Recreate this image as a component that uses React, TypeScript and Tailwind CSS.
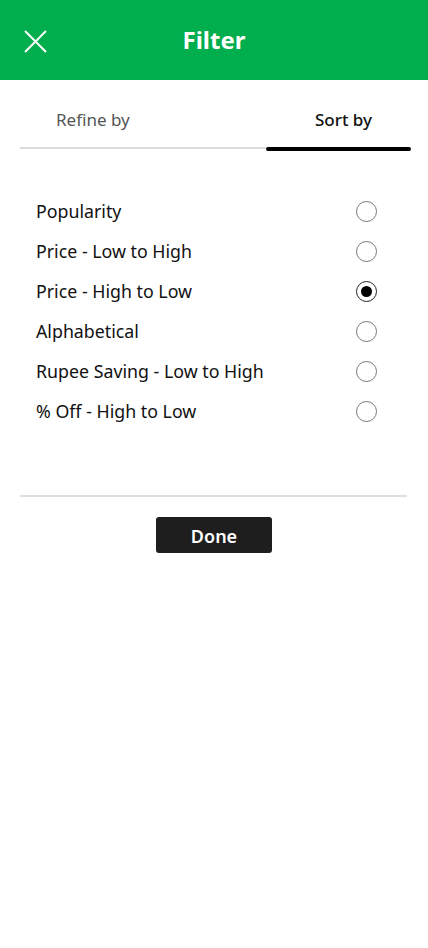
const options = [
  "Popularity",
  "Price - Low to High",
  "Price - High to Low",
  "Alphabetical",
  "Rupee Saving - Low to High",
  "% Off - High to Low",
];

const selected = 2;

export default function App() {
  return (
    <div
      className="w-[428px] min-h-[948px] bg-white"
      style={{ fontFamily: '"Noto Sans", "Open Sans", sans-serif' }}
    >
      {/* header */}
      <div className="relative h-[80px] bg-[#00ae4d] flex items-center justify-center">
        <button className="absolute left-[24px] top-[30px] w-[23px] h-[23px]">
          <svg viewBox="0 0 23 23" width="23" height="23" fill="none" stroke="white" strokeWidth="2">
            <path d="M1 1 L22 22 M22 1 L1 22" />
          </svg>
        </button>
        <h1 className="text-[24px] font-bold text-white leading-none">Filter</h1>
      </div>

      {/* tabs */}
      <div className="ml-[20px] mr-[17px] flex h-[70px]">
        <div className="w-[246px] flex flex-col">
          <div className="flex-1 flex items-center pt-[12px] pl-[36px] text-[17px] text-[#555]">Refine by</div>
          <div className="h-[2px] bg-[#dcdcdc] mb-[1px]" />
        </div>
        <div className="flex-1 flex flex-col">
          <div className="flex-1 flex items-center justify-center pt-[12px] pl-[10px] text-[17px] font-medium text-[#111]">
            Sort by
          </div>
          <div className="h-[4px] bg-black rounded-full -mb-[1px]" />
        </div>
      </div>

      {/* options */}
      <ul className="pt-[41px] pl-[36px] pr-[51px]">
        {options.map((opt, i) => (
          <li key={opt} className="h-[40px] flex items-center justify-between text-[17.8px] text-[#111]">
            <span>{opt}</span>
            <span
              className={
                "w-[21px] h-[21px] rounded-full border flex items-center justify-center " +
                (i === selected ? "border-[#222]" : "border-[#777]")
              }
            >
              {i === selected && <span className="w-[11px] h-[11px] rounded-full bg-black" />}
            </span>
          </li>
        ))}
      </ul>

      <div className="mt-[64px] ml-[20px] mr-[21px] h-[2px] bg-[#dedede]" />

      <div className="flex justify-center pt-[20px]">
        <button className="w-[116px] h-[36px] pt-[2px] rounded-[3px] bg-[#1e1e1e] text-white text-[18px] font-semibold">
          Done
        </button>
      </div>
    </div>
  );
}
